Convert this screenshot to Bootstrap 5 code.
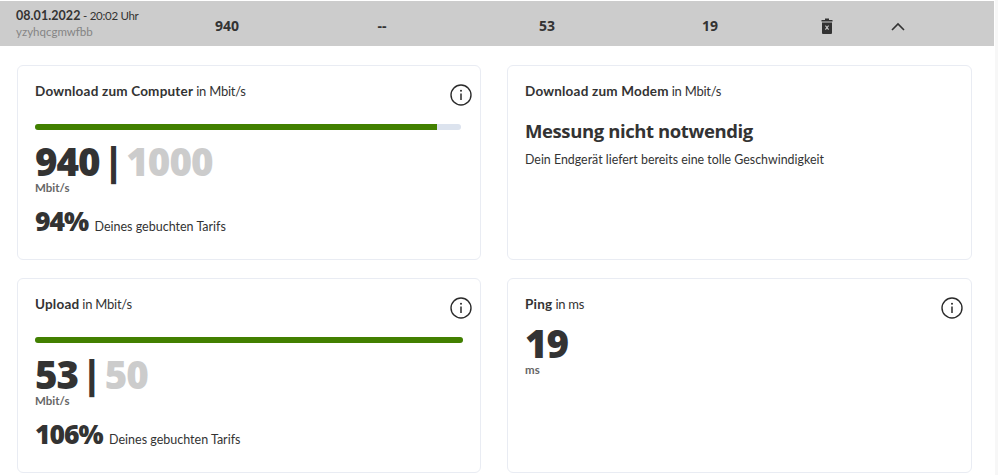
<!DOCTYPE html>
<html lang="de">

<head>
    <meta charset="UTF-8">
    <meta name="viewport" content="width=device-width, initial-scale=1.0">
    <title>Speedtest</title>
    <link href="https://cdn.jsdelivr.net/npm/bootstrap@5.3.0/dist/css/bootstrap.min.css" rel="stylesheet">
    <style>
        body {
            font-family: "Lato", "Liberation Sans", sans-serif;
            color: #333;
            background: #fff;
            font-size: 13px;
            overflow: hidden;
        }

        .page-frame {
            height: 475px;
        }

        .page-wrap {
            width: 995px;
            flex: none;
            padding-top: 1px;
        }

        .page-rail {
            flex: 1;
            background: #f7f7f7;
        }

        .result-head {
            width: 994px;
            height: 45px;
            background: #ccc;
            padding-left: 16px;
        }

        .head-when {
            width: 181px;
            padding-top: 1px;
            font-size: 11.5px;
            line-height: 16px;
        }

        .head-time {
            letter-spacing: -.3px;
        }

        .head-when b {
            font-size: 12.5px;
            letter-spacing: .05px;
        }

        .head-user {
            color: #858585;
        }

        .head-val {
            font-family: "Open Sans", sans-serif;
            font-size: 14px;
            font-weight: 700;
            text-align: center;
            flex: none;
            padding-top: 3px;
        }

        .val-a { width: 60px; }
        .val-b { width: 60px; margin-left: 95px; }
        .val-c { width: 60px; margin-left: 105px; }
        .val-d { width: 60px; margin-left: 103px; }

        .head-icon {
            flex: none;
            display: flex;
        }

        .icon-bin { margin-left: 81px; margin-top: 4px; }
        .icon-up { margin-left: 58px; margin-top: 5px; }

        .tiles {
            display: grid;
            grid-template-columns: 464px 465px;
            grid-template-rows: 195px 195px;
            column-gap: 26px;
            row-gap: 18px;
            padding: 19px 0 0 17px;
        }

        .tile {
            position: relative;
            border: 1px solid #e9ecf3;
            border-radius: 6px;
            padding: 16px 17px 0;
            background: #fff;
        }

        .tile-title {
            font-size: 13px;
            line-height: 18px;
            letter-spacing: -.25px;
        }

        .tile-title b {
            font-size: 13.5px;
            font-weight: 700;
            letter-spacing: .2px;
        }

        .tile-info {
            position: absolute;
            top: 18px;
            right: 8px;
            display: flex;
        }

        .speed-track {
            height: 6px;
            margin-top: 24px;
            width: 426px;
            border-radius: 3px;
            background: #dce3ee;
        }

        .speed-track-wide {
            width: 428px;
        }

        .speed-fill {
            background: #428000;
            border-radius: 3px 0 0 3px;
        }

        .speed-full {
            border-radius: 3px;
        }

        .big-num {
            font-family: "Open Sans", sans-serif;
            font-size: 38.5px;
            line-height: 36px;
            font-weight: 800;
            margin-top: 13px;
            letter-spacing: -1px;
            word-spacing: -5px;
        }

        .big-max {
            color: #ccc;
        }

        .big-unit {
            font-size: 11.5px;
            line-height: 12px;
            font-weight: 700;
            color: #666;
            margin-top: 3px;
        }

        .pct-line {
            margin-top: 11px;
            line-height: 32px;
        }

        .pct-num {
            font-family: "Open Sans", sans-serif;
            font-size: 26.500px;
            font-weight: 800;
            letter-spacing: -1px;
        }

        .pct-text {
            font-size: 12.5px;
            margin-left: 3px;
        }

        .modem-head {
            font-family: "Open Sans", sans-serif;
            font-size: 18.500px;
            line-height: 26px;
            font-weight: 700;
            margin-top: 18px;
            letter-spacing: -.4px;
        }

        .modem-text {
            font-size: 12.4px;
            line-height: 18px;
            margin-top: 7px;
        }

        .ping-num {
            margin-top: 12px;
        }
    </style>
</head>

<body>
    <div class="page-frame d-flex">
        <div class="page-wrap">
            <div class="result-head d-flex align-items-center">
                <div class="head-when flex-shrink-0">
                    <div class="head-time"><b>08.01.2022</b> - 20:02 Uhr</div>
                    <div class="head-user">yzyhqcgmwfbb</div>
                </div>
                <div class="head-val val-a">940</div>
                <div class="head-val val-b">--</div>
                <div class="head-val val-c">53</div>
                <div class="head-val val-d">19</div>
                <div class="head-icon icon-bin">
                    <svg width="12" height="16" viewBox="0 0 12 16">
                        <path d="M4 0.5h4v1.500h3.500v1.600H.5V2H4z" fill="#333"/>
                        <path fill-rule="evenodd" d="M1 4.500h10V15a1 1 0 0 1-1 1H2a1 1 0 0 1-1-1zM4 8l1.300 1.600L4 11.200l.8.8L6 10.500 7.200 12l.8-.8-1.300-1.600L8 8l-.8-.8L6 8.700 4.800 7.200z" fill="#333"/>
                    </svg>
                </div>
                <div class="head-icon icon-up">
                    <svg width="14" height="9" viewBox="0 0 14 9">
                        <path d="M1 8l6-6 6 6" fill="none" stroke="#333" stroke-width="1.600"/>
                    </svg>
                </div>
            </div>

            <div class="tiles">
                <div class="tile">
                    <div class="tile-title"><b>Download zum Computer</b> in Mbit/s</div>
                    <div class="tile-info">
                        <svg width="22" height="22" viewBox="0 0 22 22">
                            <circle cx="11" cy="11" r="10" fill="none" stroke="#2b2b2b" stroke-width="1.400"/>
                            <path d="M11 9.500v6.500" stroke="#2b2b2b" stroke-width="1.500"/>
                            <circle cx="11" cy="6.800" r="1" fill="#2b2b2b"/>
                        </svg>
                    </div>
                    <div class="speed-track d-flex">
                        <div class="speed-fill" style="width: 94.3%"></div>
                    </div>
                    <div class="big-num">940 | <span class="big-max">1000</span></div>
                    <div class="big-unit">Mbit/s</div>
                    <div class="pct-line"><span class="pct-num">94%</span> <span class="pct-text">Deines gebuchten Tarifs</span></div>
                </div>

                <div class="tile">
                    <div class="tile-title"><b>Download zum Modem</b> in Mbit/s</div>
                    <div class="modem-head">Messung nicht notwendig</div>
                    <div class="modem-text">Dein Endgerät liefert bereits eine tolle Geschwindigkeit</div>
                </div>

                <div class="tile">
                    <div class="tile-title"><b>Upload</b> in Mbit/s</div>
                    <div class="tile-info">
                        <svg width="22" height="22" viewBox="0 0 22 22">
                            <circle cx="11" cy="11" r="10" fill="none" stroke="#2b2b2b" stroke-width="1.400"/>
                            <path d="M11 9.500v6.500" stroke="#2b2b2b" stroke-width="1.500"/>
                            <circle cx="11" cy="6.800" r="1" fill="#2b2b2b"/>
                        </svg>
                    </div>
                    <div class="speed-track speed-track-wide d-flex">
                        <div class="speed-fill speed-full" style="width: 100%"></div>
                    </div>
                    <div class="big-num">53 | <span class="big-max">50</span></div>
                    <div class="big-unit">Mbit/s</div>
                    <div class="pct-line"><span class="pct-num">106%</span> <span class="pct-text">Deines gebuchten Tarifs</span></div>
                </div>

                <div class="tile">
                    <div class="tile-title"><b>Ping</b> in ms</div>
                    <div class="tile-info">
                        <svg width="22" height="22" viewBox="0 0 22 22">
                            <circle cx="11" cy="11" r="10" fill="none" stroke="#2b2b2b" stroke-width="1.400"/>
                            <path d="M11 9.500v6.500" stroke="#2b2b2b" stroke-width="1.500"/>
                            <circle cx="11" cy="6.800" r="1" fill="#2b2b2b"/>
                        </svg>
                    </div>
                    <div class="big-num ping-num">19</div>
                    <div class="big-unit">ms</div>
                </div>
            </div>
        </div>
        <div class="page-rail"></div>
    </div>

    <script src="https://cdn.jsdelivr.net/npm/bootstrap@5.3.0/dist/js/bootstrap.bundle.min.js"></script>
</body>

</html>
